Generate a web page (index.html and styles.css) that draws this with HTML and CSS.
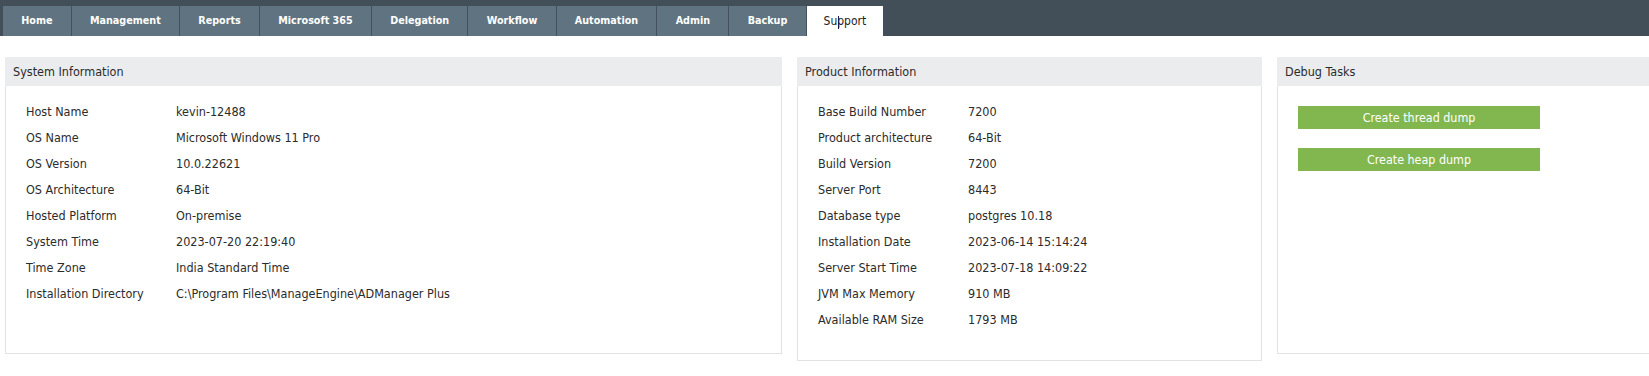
FILE: index.html
```html
<!DOCTYPE html>
<html lang="en">
<head>
<meta charset="utf-8">
<title>Support</title>
<link rel="stylesheet" href="styles.css">
</head>
<body>
<nav class="topnav">
  <a class="tab">Home</a>
  <a class="tab">Management</a>
  <a class="tab">Reports</a>
  <a class="tab">Microsoft 365</a>
  <a class="tab">Delegation</a>
  <a class="tab">Workflow</a>
  <a class="tab">Automation</a>
  <a class="tab">Admin</a>
  <a class="tab">Backup</a>
  <a class="tab tab-active">Support<span class="caret"></span></a>
</nav>
<main class="panels">
  <section class="panel panel-system">
    <header class="panel-head">System Information</header>
    <div class="panel-body">
      <table class="info">
        <tr><td class="lbl">Host Name</td><td>kevin-12488</td></tr>
        <tr><td class="lbl">OS Name</td><td>Microsoft Windows 11 Pro</td></tr>
        <tr><td class="lbl">OS Version</td><td>10.0.22621</td></tr>
        <tr><td class="lbl">OS Architecture</td><td>64-Bit</td></tr>
        <tr><td class="lbl">Hosted Platform</td><td>On-premise</td></tr>
        <tr><td class="lbl">System Time</td><td>2023-07-20 22:19:40</td></tr>
        <tr><td class="lbl">Time Zone</td><td>India Standard Time</td></tr>
        <tr><td class="lbl">Installation Directory</td><td>C:\Program Files\ManageEngine\ADManager Plus</td></tr>
      </table>
    </div>
  </section>
  <section class="panel panel-product">
    <header class="panel-head">Product Information</header>
    <div class="panel-body">
      <table class="info">
        <tr><td class="lbl">Base Build Number</td><td>7200</td></tr>
        <tr><td class="lbl">Product architecture</td><td>64-Bit</td></tr>
        <tr><td class="lbl">Build Version</td><td>7200</td></tr>
        <tr><td class="lbl">Server Port</td><td>8443</td></tr>
        <tr><td class="lbl">Database type</td><td>postgres 10.18</td></tr>
        <tr><td class="lbl">Installation Date</td><td>2023-06-14 15:14:24</td></tr>
        <tr><td class="lbl">Server Start Time</td><td>2023-07-18 14:09:22</td></tr>
        <tr><td class="lbl">JVM Max Memory</td><td>910 MB</td></tr>
        <tr><td class="lbl">Available RAM Size</td><td>1793 MB</td></tr>
      </table>
    </div>
  </section>
  <section class="panel panel-debug">
    <header class="panel-head">Debug Tasks</header>
    <div class="panel-body debug-body">
      <button class="btn" type="button">Create thread dump</button>
      <button class="btn" type="button">Create heap dump</button>
    </div>
  </section>
</main>
</body>
</html>
```
FILE: styles.css
```css
* { box-sizing: border-box; }

html, body {
  margin: 0;
  padding: 0;
  background: #ffffff;
  overflow: hidden;
}

body {
  font-family: "DejaVu Sans Condensed", "DejaVu Sans", sans-serif;
  font-stretch: semi-condensed;
  font-size: 12.5px;
  color: #2b2b2b;
}

.topnav {
  display: flex;
  height: 36px;
  padding: 6px 0 0 3px;
  background: #434f58;
}

.tab {
  position: relative;
  display: block;
  height: 30px;
  line-height: 30px;
  padding: 0 18.25px;
  background: #5f7480;
  border-right: 1px solid #45525b;
  color: #ffffff;
  font-weight: bold;
  font-size: 10.7px;
  white-space: nowrap;
}

.tab-active {
  padding: 0 17px;
  background: #ffffff;
  color: #222222;
  font-weight: normal;
  font-size: 12px;
  border-right: 0;
}

.caret {
  position: absolute;
  left: 31px;
  top: 10px;
  width: 1px;
  height: 13px;
  background: #1e1b4a;
}

.panels {
  display: flex;
  align-items: flex-start;
  gap: 15px;
  padding: 21px 0 0 5px;
  width: 1800px;
}

.panel {
  flex: none;
  border: 1px solid #e1e2e4;
  border-top: 0;
  background: #ffffff;
}

.panel-system { width: 777px; }
.panel-product { width: 465px; }
.panel-debug { width: 465px; }

.panel-head {
  height: 29px;
  line-height: 29px;
  margin: 0 -1px;
  padding-left: 8px;
  background: #ebecee;
  color: #2b2b2b;
}

.panel-body {
  min-height: 267px;
  padding: 13px 20px 27px;
}

.info {
  border-collapse: collapse;
}

.info td {
  height: 26px;
  padding: 0;
  line-height: 26px;
  white-space: nowrap;
  vertical-align: middle;
}

.info .lbl {
  width: 150px;
}

.debug-body {
  display: flex;
  flex-direction: column;
  align-items: flex-start;
  gap: 19px;
  padding-top: 20px;
}

.btn {
  width: 242px;
  height: 23px;
  padding: 0;
  border: 0;
  background: #82b74f;
  color: #ffffff;
  font-family: inherit;
  font-stretch: inherit;
  font-size: 12.4px;
  cursor: pointer;
}
```
